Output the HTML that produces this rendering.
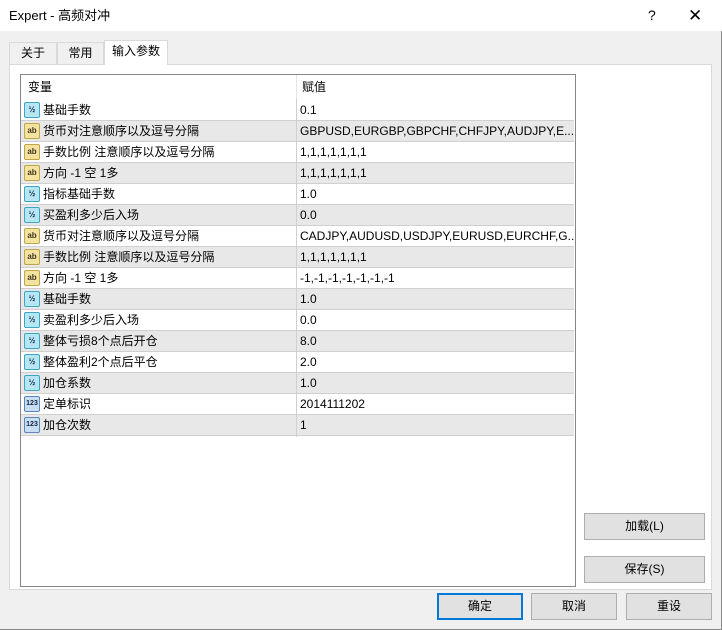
<!DOCTYPE html><html><head><meta charset="utf-8"><style>
*{margin:0;padding:0;box-sizing:border-box}
body{width:722px;height:630px;background:#f0f0f0;font-family:"Liberation Sans","Noto Sans CJK SC",sans-serif;font-size:12px;color:#000;position:relative;overflow:hidden;border-right:1px solid #888;border-bottom:1px solid #888}
.title{position:absolute;left:0;top:0;width:722px;height:31px;background:#fff;}
.title span{position:absolute;left:9px;top:0;line-height:31px;font-size:13px}
.title .q{left:648px;font-size:14px}
.title .x{left:688px;font-size:17px;font-weight:300}
.tab{position:absolute;top:42px;height:22px;border:1px solid #d9d9d9;border-bottom:none;background:#f0f0f0;line-height:20px;text-align:center}
.panel{position:absolute;left:9px;top:64px;width:703px;height:526px;background:#fff;border:1px solid #d9d9d9}
.list{position:absolute;left:20px;top:74px;width:556px;height:513px;border:1px solid #828790;background:#fff;overflow:hidden}
.hdr{position:absolute;left:0;top:0;width:554px;height:24px}
.hdr span{position:absolute;top:0;line-height:24px}
.row{position:absolute;left:0;width:553px;height:21px;border-bottom:1px solid #d0d0d0}
.row.g{background:#e8e8e8}
.row span{position:absolute;top:0;line-height:20px;white-space:nowrap}
.ic{position:absolute;left:3px;top:2px;width:16px;height:16px;border-radius:2px;font-size:8px;font-weight:bold;text-align:center;line-height:14px}
.v{background:#b6e6f2;border:1px solid #3aa8c4;color:#125}
.a{background:#f3e3a0;border:1px solid #c2a544;color:#432}
.n{background:#c7dff3;border:1px solid #5b88b8;color:#124;font-size:7px}
.btn{position:absolute;height:27px;background:#e1e1e1;border:1px solid #adadad;text-align:center;line-height:25px}
</style></head><body>
<div class="title"><span>Expert - 高频对冲</span><span class="q">?</span><span class="x">✕</span></div>
<div class="tab" style="left:9px;width:48px">关于</div>
<div class="tab" style="left:57px;width:47px">常用</div>
<div class="panel"></div>
<div class="tab" style="left:104px;top:40px;width:64px;height:25px;background:#fff;z-index:2">输入参数</div>
<div class="list">
<div class="hdr"><span style="left:7px">变量</span><span style="left:281px">赋值</span><div style="position:absolute;left:275px;top:0;width:1px;height:24px;background:#e5e5e5"></div></div>
<div style="position:absolute;left:275px;top:24px;width:1px;height:338px;background:#d0d0d0;z-index:1"></div>
<div class="row" style="top:25px"><div class="ic v">½</div><span style="left:22px">基础手数</span><span style="left:279px">0.1</span></div>
<div class="row g" style="top:46px"><div class="ic a">ab</div><span style="left:22px">货币对注意顺序以及逗号分隔</span><span style="left:279px">GBPUSD,EURGBP,GBPCHF,CHFJPY,AUDJPY,E...</span></div>
<div class="row" style="top:67px"><div class="ic a">ab</div><span style="left:22px">手数比例 注意顺序以及逗号分隔</span><span style="left:279px">1,1,1,1,1,1,1</span></div>
<div class="row g" style="top:88px"><div class="ic a">ab</div><span style="left:22px">方向 -1 空 1多</span><span style="left:279px">1,1,1,1,1,1,1</span></div>
<div class="row" style="top:109px"><div class="ic v">½</div><span style="left:22px">指标基础手数</span><span style="left:279px">1.0</span></div>
<div class="row g" style="top:130px"><div class="ic v">½</div><span style="left:22px">买盈利多少后入场</span><span style="left:279px">0.0</span></div>
<div class="row" style="top:151px"><div class="ic a">ab</div><span style="left:22px">货币对注意顺序以及逗号分隔</span><span style="left:279px">CADJPY,AUDUSD,USDJPY,EURUSD,EURCHF,G...</span></div>
<div class="row g" style="top:172px"><div class="ic a">ab</div><span style="left:22px">手数比例 注意顺序以及逗号分隔</span><span style="left:279px">1,1,1,1,1,1,1</span></div>
<div class="row" style="top:193px"><div class="ic a">ab</div><span style="left:22px">方向 -1 空 1多</span><span style="left:279px">-1,-1,-1,-1,-1,-1,-1</span></div>
<div class="row g" style="top:214px"><div class="ic v">½</div><span style="left:22px">基础手数</span><span style="left:279px">1.0</span></div>
<div class="row" style="top:235px"><div class="ic v">½</div><span style="left:22px">卖盈利多少后入场</span><span style="left:279px">0.0</span></div>
<div class="row g" style="top:256px"><div class="ic v">½</div><span style="left:22px">整体亏损8个点后开仓</span><span style="left:279px">8.0</span></div>
<div class="row" style="top:277px"><div class="ic v">½</div><span style="left:22px">整体盈利2个点后平仓</span><span style="left:279px">2.0</span></div>
<div class="row g" style="top:298px"><div class="ic v">½</div><span style="left:22px">加仓系数</span><span style="left:279px">1.0</span></div>
<div class="row" style="top:319px"><div class="ic n">123</div><span style="left:22px">定单标识</span><span style="left:279px">2014111202</span></div>
<div class="row g" style="top:340px"><div class="ic n">123</div><span style="left:22px">加仓次数</span><span style="left:279px">1</span></div>
</div>
<div class="btn" style="left:584px;top:513px;width:121px">加载(L)</div>
<div class="btn" style="left:584px;top:556px;width:121px">保存(S)</div>
<div class="btn" style="left:437px;top:593px;width:86px;border:2px solid #0078d7;line-height:23px">确定</div>
<div class="btn" style="left:531px;top:593px;width:86px">取消</div>
<div class="btn" style="left:626px;top:593px;width:86px">重设</div>
</body></html>
